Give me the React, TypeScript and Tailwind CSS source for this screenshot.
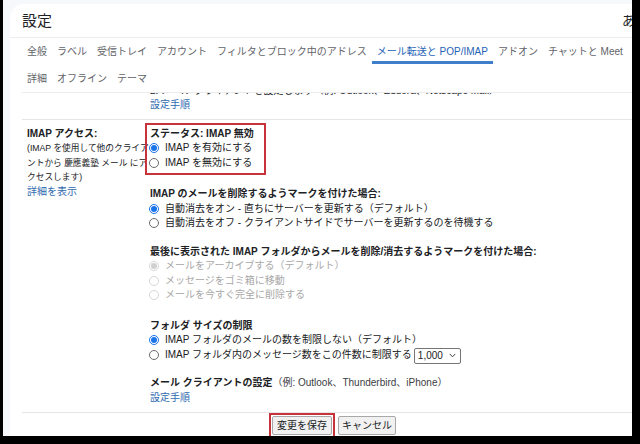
import React from "react";

const tabsTop = [
  "全般",
  "ラベル",
  "受信トレイ",
  "アカウント",
  "フィルタとブロック中のアドレス",
  "メール転送と POP/IMAP",
  "アドオン",
  "チャットと Meet",
];
const tabsBottom = ["詳細", "オフライン", "テーマ"];
const ACTIVE = "メール転送と POP/IMAP";

type RadioProps = { label: React.ReactNode; checked?: boolean; disabled?: boolean };

const Radio: React.FC<RadioProps> = ({ label, checked, disabled }) => (
  <div className="flex items-center h-[14.5px] whitespace-nowrap">
    <span
      className={
        "w-[10px] h-[10px] -ml-[1px] mr-[6px] rounded-full border flex items-center justify-center shrink-0 bg-white " +
        (disabled ? "border-[#d6d6d6]" : checked ? "border-[#1a73e8]" : "border-[#6b6b6b]")
      }
    >
      {checked && (
        <span className={"w-[6px] h-[6px] rounded-full " + (disabled ? "bg-[#d0d0d0]" : "bg-[#1a73e8]")} />
      )}
    </span>
    <span className={disabled ? "text-[#a8a8a8]" : "text-[#202124]"}>{label}</span>
  </div>
);

const Heading: React.FC<{ children: React.ReactNode; className?: string }> = ({ children, className }) => (
  <div className={"h-[14.5px] leading-[14.5px] font-bold text-[#202124] whitespace-nowrap " + (className || "")}>
    {children}
  </div>
);

export default function App() {
  return (
    <div className="w-[640px] h-[444px] bg-black overflow-hidden [font-family:'Liberation_Sans','Noto_Sans_CJK_JP',sans-serif] text-[10px] leading-[14.5px]">
      <div className="ml-[3px] w-[629px] h-[436px] bg-[#f6f8fc] pl-[7px] pt-[4px] flex">
        <div className="flex-1 bg-white rounded-tl-[14px] flex flex-col overflow-hidden">
          {/* header */}
          <div className="h-[34px] shrink-0 border-b border-[#ececec] flex items-center justify-between pl-[12px]">
            <span className="text-[15px] text-[#202124] leading-none">設定</span>
            <span className="text-[13px] text-[#202124] leading-none -mr-[3px]">あ</span>
          </div>

          {/* tabs */}
          <div className="ml-[12px] border-b border-[#ececec] text-[#5f6368] shrink-0">
            <div className="flex h-[26px]">
              {tabsTop.map((t) => (
                <div
                  key={t}
                  className={
                    "px-[5px] flex items-center whitespace-nowrap border-b-[3px] " +
                    (t === ACTIVE ? "border-[#3f7ecb] text-[#1f63b5]" : "border-transparent")
                  }
                >
                  <span className="translate-y-[3px]">{t}</span>
                </div>
              ))}
            </div>
            <div className="flex h-[28px] pt-[3px]">
              {tabsBottom.map((t) => (
                <div key={t} className="px-[5px] flex items-center whitespace-nowrap">
                  {t}
                </div>
              ))}
            </div>
          </div>

          {/* content */}
          <div className="flex-1 overflow-hidden pl-[12px]">
            {/* previous section (scrolled off the top) */}
            <div className="flex border-b border-[#e6e6e6] pb-[6px]">
              <div className="w-[128px] shrink-0" />
              <div>
                <div className="h-[5px] overflow-hidden flex flex-col justify-end">
                  <div className="text-[#202124] whitespace-nowrap shrink-0">
                    2. メール クライアントを設定します（例: Outlook、Eudora、Netscape Mail）
                  </div>
                </div>
                <div className="text-[#2f6ab0]">設定手順</div>
              </div>
            </div>

            {/* IMAP section */}
            <div className="flex border-b border-[#e6e6e6] pt-[3px] pb-[7px]">
              <div className="w-[128px] shrink-0 pl-[5px] pt-[4px]">
                <Heading>IMAP アクセス:</Heading>
                <div className="text-[8.7px] leading-[14.5px] text-[#202124] whitespace-nowrap">
                  (IMAP を使用して他のクライア
                  <br />
                  ントから 慶應義塾 メール にア
                  <br />
                  クセスします)
                </div>
                <div className="text-[#2f6ab0]">詳細を表示</div>
              </div>

              <div className="flex flex-col">
                <div className="w-[121px] -ml-[5px] border-2 border-[#c8323a] pl-[3px] pt-[2px] pb-[3px]">
                  <Heading>ステータス: IMAP 無効</Heading>
                  <Radio label="IMAP を有効にする" checked />
                  <Radio label="IMAP を無効にする" />
                </div>

                <Heading className="mt-[12px]">IMAP のメールを削除するようマークを付けた場合:</Heading>
                <Radio label="自動消去をオン - 直ちにサーバーを更新する（デフォルト）" checked />
                <Radio label="自動消去をオフ - クライアントサイドでサーバーを更新するのを待機する" />

                <Heading className="mt-[14px]">
                  最後に表示された IMAP フォルダからメールを削除/消去するようマークを付けた場合:
                </Heading>
                <Radio label="メールをアーカイブする（デフォルト）" checked disabled />
                <Radio label="メッセージをゴミ箱に移動" disabled />
                <Radio label="メールを今すぐ完全に削除する" disabled />

                <Heading className="mt-[16px]">フォルダ サイズの制限</Heading>
                <Radio label="IMAP フォルダのメールの数を制限しない（デフォルト）" checked />
                <div className="flex items-center h-[14.5px] whitespace-nowrap">
                  <span className="w-[10px] h-[10px] -ml-[1px] mr-[6px] rounded-full border border-[#6b6b6b] shrink-0" />
                  <span className="text-[#202124]">IMAP フォルダ内のメッセージ数をこの件数に制限する</span>
                  <span className="ml-[2px] mt-[2px] h-[16px] w-[47px] border border-[#767676] rounded-[2px] flex items-center justify-between pl-[3px] pr-[4px] text-[#202124] shrink-0">
                    1,000
                    <svg width="7" height="5" viewBox="0 0 7 5" fill="none">
                      <path d="M0.8 1 L3.5 3.8 L6.2 1" stroke="#444" strokeWidth="1" />
                    </svg>
                  </span>
                </div>

                <div className="mt-[14px] h-[14.5px] whitespace-nowrap text-[#202124]">
                  <span className="font-bold">メール クライアントの設定</span>
                  <span className="text-[#3c4043]">（例: Outlook、Thunderbird、iPhone）</span>
                </div>
                <div className="text-[#2f6ab0]">設定手順</div>
              </div>
            </div>

            {/* buttons */}
            <div className="flex items-start pl-[247px]">
              <div className="border-2 border-[#c8323a] p-[1px]">
                <button className="h-[19px] w-[60px] bg-[#f1f1f1] border border-[#a8a8a8] rounded-[2px] text-[10px] text-[#202124] leading-none">
                  変更を保存
                </button>
              </div>
              <button className="ml-[3px] mt-[3px] h-[19px] w-[58px] bg-[#f1f1f1] border border-[#a8a8a8] rounded-[2px] text-[10px] text-[#202124] leading-none">
                キャンセル
              </button>
            </div>
          </div>
        </div>
      </div>
    </div>
  );
}
